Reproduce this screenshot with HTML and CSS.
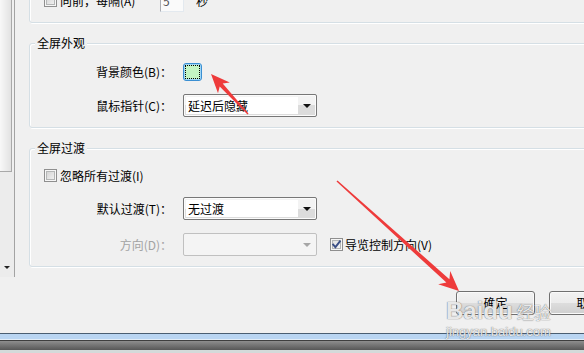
FILE: index.html
```html
<!DOCTYPE html>
<html lang="zh-CN">
<head>
<meta charset="utf-8">
<title>全屏设置</title>
<link rel="stylesheet" href="styles.css">
</head>
<body>
<div class="window">
  <div class="main">
    <div class="scrollbar">
      <div class="thumb"></div>
      <div class="track"><span class="sb-arrow"></span></div>
    </div>
    <div class="content">
      <div class="group group-cut">
        <div class="top-row">
          <span class="checkbox"></span>
          <span class="top-label">向前，每隔(A)</span>
          <span class="spin">5</span>
          <span class="unit">秒</span>
        </div>
      </div>

      <div class="group titled">
        <div class="legend">全屏外观</div>
        <div class="form form-a">
          <span class="lbl">背景颜色(B)：</span>
          <span class="ctl"><span class="color-btn"><span class="swatch"></span></span></span>
          <span></span>
          <span class="lbl">鼠标指针(C)：</span>
          <span class="select"><span class="select-text">延迟后隐藏</span><span class="select-btn"><span class="tri"></span></span></span>
          <span></span>
        </div>
      </div>

      <div class="group titled">
        <div class="legend">全屏过渡</div>
        <div class="check-row">
          <span class="checkbox"></span>
          <span class="check-text">忽略所有过渡(I)</span>
        </div>
        <div class="form form-b">
          <span class="lbl">默认过渡(T)：</span>
          <span class="select"><span class="select-text">无过渡</span><span class="select-btn"><span class="tri"></span></span></span>
          <span></span>
          <span class="lbl disabled">方向(D)：</span>
          <span class="select is-disabled"><span class="select-text"></span><span class="select-btn"><span class="tri"></span></span></span>
          <span class="extra">
            <span class="checkbox checked"><svg width="11" height="11" viewBox="0 0 11 11"><path d="M2.2 5.6 L4.4 8.2 L8.9 2.4" fill="none" stroke="#3b4f86" stroke-width="1.9" stroke-linecap="square"/></svg></span>
            <span class="check-text">导览控制方向(V)</span>
          </span>
        </div>
      </div>

      <div class="buttons">
        <span class="btn">确定</span>
        <span class="btn">取消</span>
      </div>
    </div>
  </div>
  <div class="frame"></div>

  <div class="watermark">
    <div class="wm-line"><span class="wm-logo">Baidu</span><span class="wm-cn">经验</span></div>
    <div class="wm-url">jingyan.baidu.com</div>
  </div>

  <svg class="arrows" width="584" height="353" viewBox="0 0 584 353">
    <polygon fill="#ee3b3b" points="248.5,113.5 222.7,83.6 229.8,82.5 211,74 218.0,93.3 219.7,86.4 247.5,114.5"/>
    <polygon fill="#ee3b3b" points="336.5,181.6 446.4,282.6 438.2,284.3 459,291 450.2,270.9 449.4,279.2 337.5,180.4"/>
  </svg>
</div>
</body>
</html>
```

FILE: styles.css
```css
* { box-sizing: border-box; }
html, body { margin: 0; padding: 0; }
body {
  width: 584px;
  height: 353px;
  overflow: hidden;
  background: #f0f0f0;
  font: 12px/16px "Noto Sans CJK SC", "Noto Sans", sans-serif;
  color: #000;
}
.window {
  position: relative;
  width: 584px;
  height: 353px;
  overflow: hidden;
  display: flex;
  flex-direction: column;
}
.main {
  height: 333px;
  display: flex;
  overflow: hidden;
}

/* left scrollbar */
.scrollbar {
  flex: none;
  width: 15px;
  height: 277px;
  border-right: 1px solid #a3a3a3;
  display: flex;
  flex-direction: column;
}
.thumb {
  height: 172px;
  width: 12px;
  border-right: 1px solid #a9a9a9;
  border-bottom: 1px solid #a9a9a9;
  background: linear-gradient(to right, #f8f8f8, #e2e2e2);
}
.track {
  flex: 1;
  display: flex;
  align-items: flex-end;
  padding: 0 0 8px 4px;
  background: #ececec;
}
.sb-arrow {
  width: 0;
  height: 0;
  border-left: 3px solid transparent;
  border-right: 3px solid transparent;
  border-top: 3px solid #222;
}

.content {
  flex: none;
  width: 660px;
  padding-left: 14px;
}

/* group boxes */
.group {
  border: 1px solid #d5dfe5;
  border-radius: 3px;
  box-shadow: inset 1px 1px 0 #fff, 1px 1px 0 #fff;
}
.group-cut {
  margin-top: -30px;
  padding: 18px 0 10px 14px;
}
.titled {
  margin-top: 20px;
  padding-bottom: 10px;
}
.legend {
  width: fit-content;
  margin: -8px 0 0 5px;
  padding: 0 2px;
  line-height: 14px;
  background: #f0f0f0;
}

.top-row {
  display: flex;
  align-items: center;
  height: 23px;
}
.top-label {
  width: 103px;
  padding-left: 3px;
  white-space: nowrap;
}
.spin {
  width: 24px;
  height: 23px;
  border: 1px solid #abadb3;
  border-right-color: #e3e9ef;
  border-bottom-color: #e3e9ef;
  background: #fafafa;
  padding-left: 2px;
  line-height: 21px;
  color: #555;
}
.unit {
  margin-left: 12px;
}

/* checkbox */
.checkbox {
  flex: none;
  display: inline-flex;
  align-items: center;
  justify-content: center;
  width: 13px;
  height: 13px;
  border: 1px solid #8f8f8f;
  background: linear-gradient(135deg, #cdcdcd, #f7f7f7);
  box-shadow: inset 0 0 0 1px #f6f6f6, inset 0 0 0 2px #b4b6b6;
}
.checkbox.checked {
  background: linear-gradient(135deg, #dcdcdc, #fafafa);
}
.checkbox svg { display: block; }

.check-row {
  display: flex;
  align-items: center;
  gap: 3px;
  height: 13px;
  margin: 14px 0 15px 14px;
}
.check-text { white-space: nowrap; }

/* form grid */
.form {
  display: grid;
  grid-template-columns: 142px 134px auto;
  column-gap: 11px;
  row-gap: 13px;
  align-items: center;
}
.form-a { padding-top: 13px; }
.lbl {
  text-align: right;
  white-space: nowrap;
}
.lbl.disabled { color: #a3a3a3; }
.ctl { display: flex; }

.color-btn {
  display: block;
  width: 19px;
  height: 18px;
  padding: 1px;
  border: 1px solid #3b8fd2;
  border-radius: 3px;
  background: #9fd6f6;
}
.swatch {
  display: block;
  width: 100%;
  height: 100%;
  border: 1px dotted #000;
  background: #c3f5c3;
}

/* combobox */
.select {
  display: flex;
  width: 134px;
  height: 23px;
  border: 1px solid #777;
  border-radius: 2px;
  background: linear-gradient(#f3f3f3 50%, #dcdcdc 50%);
  box-shadow: inset 0 0 0 1px #fbfbfb;
}
.select-text {
  flex: 1;
  margin: 2px 0 2px 2px;
  padding-left: 2px;
  background: #fff;
  line-height: 17px;
  white-space: nowrap;
}
.select-btn {
  flex: none;
  width: 18px;
  display: flex;
  align-items: center;
  justify-content: center;
}
.tri {
  width: 0;
  height: 0;
  border-left: 4px solid transparent;
  border-right: 4px solid transparent;
  border-top: 4px solid #111;
}
.select.is-disabled {
  border-color: #c0c0c0;
  background: #f4f4f4;
  box-shadow: none;
}
.select.is-disabled .select-text { background: transparent; }
.select.is-disabled .tri { border-top-color: #a6a6a6; }

.extra {
  display: flex;
  align-items: center;
  gap: 2px;
  margin-left: 2px;
}

/* buttons */
.buttons {
  display: flex;
  gap: 14px;
  margin-top: 24px;
  padding-left: 427px;
}
.btn {
  flex: none;
  width: 79px;
  height: 24px;
  border: 1px solid #707070;
  border-radius: 3px;
  background: linear-gradient(#f2f2f2 0%, #ebebeb 50%, #dddddd 50%, #cfcfcf 100%);
  box-shadow: inset 0 0 0 1px #fafafa;
  text-align: center;
  line-height: 22px;
}

/* window bottom frame */
.frame {
  height: 20px;
  background: linear-gradient(to bottom,
    #4a5e72 0 1px,
    #b9d5f2 1px 6px,
    #e2edf8 6px 7px,
    #3e3e3e 7px 8px,
    #8e8e8e 8px,
    #575757 17px,
    #d4dada 17px 20px);
}

/* overlays */
.watermark {
  position: absolute;
  left: 446px;
  top: 298px;
  color: rgba(255, 255, 255, 0.85);
  text-shadow: 0 0 1px rgba(80, 80, 80, 0.7), 0 0 1px rgba(80, 80, 80, 0.5);
  pointer-events: none;
}
.wm-line {
  display: flex;
  align-items: baseline;
  gap: 4px;
  white-space: nowrap;
}
.wm-logo {
  font: bold 24px/26px "Liberation Sans", sans-serif;
}
.wm-cn {
  font: 17px/22px "Noto Sans CJK SC", sans-serif;
}
.wm-url {
  font: 13px/14px "Liberation Sans", sans-serif;
  margin-top: 1px;
}
.arrows {
  position: absolute;
  left: 0;
  top: 0;
  pointer-events: none;
}
```
